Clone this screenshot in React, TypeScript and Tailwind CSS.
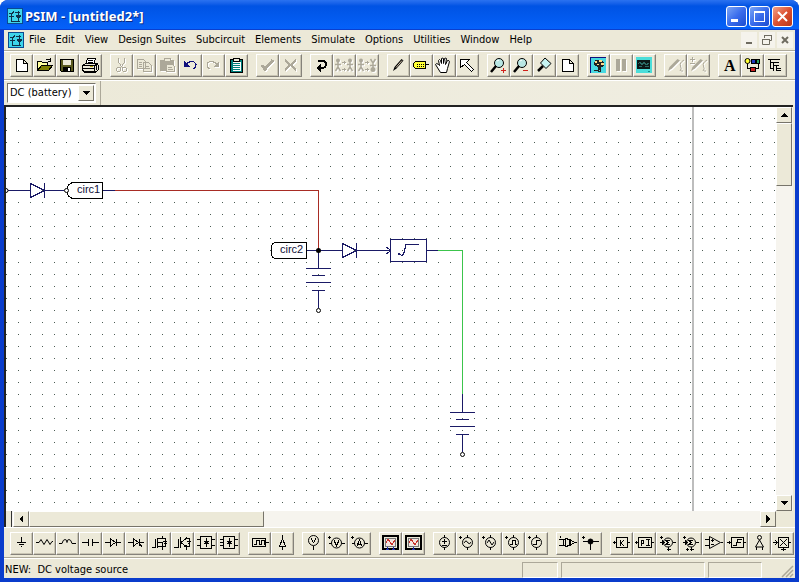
import type { ReactNode } from "react";
import clsx from "clsx";

const NAVY = "#1a1a66";

function Icon({ children, muted }: { children: ReactNode; muted?: boolean }) {
  return (
    <svg
      width="21"
      height="21"
      viewBox="1 1 21 21"
      fill="none"
      stroke={muted ? "#aca899" : "#000"}
      shapeRendering="crispEdges"
      className={clsx("shrink-0", muted && "drop-shadow-[1px_1px_0_#fff]")}
    >
      {children}
    </svg>
  );
}

type Tool = { name: string; icon: ReactNode; muted?: boolean };

function ToolGroup({ tools }: { tools: Tool[] }) {
  return (
    <div className="flex shrink-0">
      {tools.map((t) => (
        <button
          key={t.name}
          type="button"
          title={t.name}
          aria-label={t.name}
          disabled={t.muted}
          className="flex h-[23px] w-[23px] shrink-0 items-center justify-center border border-t-white border-l-white border-r-[#85827a] border-b-[#85827a] bg-[#ece9d8] shadow-[inset_-1px_-1px_0_#c9c5b4]"
        >
          <Icon muted={t.muted}>{t.icon}</Icon>
        </button>
      ))}
    </div>
  );
}

const page = <path d="M6.500 5.500h7l4 4v8h-11zM13.500 5.500v4h4" fill="#fff" />;

const person = (
  <>
    <circle cx="5" cy="6.500" r="2" fill="#aca899" stroke="none" shapeRendering="auto" />
    <path d="M2 10.500h6M5 8v6M5 13l-2.500 4M5 13l2.500 4" shapeRendering="auto" strokeWidth="1.500" />
    <path d="M9 8.500h4M11 7v3M9 15.500h4M11 14v3" />
  </>
);

const fileTools: Tool[] = [
  { name: "New", icon: page },
  {
    name: "Open",
    icon: (
      <>
        <path d="M4.500 16.500v-9h4l1 1h5v3" fill="#ffff9c" />
        <path d="M4.500 16.500l4-5h11l-4 5z" fill="#808000" />
        <path d="M12.500 6.500q2-3 5 0M17.500 4v3h-3" />
      </>
    ),
  },
  {
    name: "Save",
    icon: (
      <>
        <path d="M4.500 5.500h13v12h-12l-1-1z" fill="#5a5a20" />
        <path d="M7 6h8v5h-8z" fill="#ece9d8" stroke="none" />
        <path d="M7 13h8v5h-8z" fill="#000" stroke="none" />
        <path d="M12 14h2v3h-2z" fill="#fff" stroke="none" />
      </>
    ),
  },
  {
    name: "Print",
    icon: (
      <>
        <path d="M6.500 10.500l2-6h8l-2 6z" fill="#fff" />
        <path d="M9 6.500h5M8.500 8.500h5" />
        <path d="M3.500 11.500l3-2h11l2 2v4l-3 2.500h-11l-2-2z" fill="#ece9d8" />
        <path d="M3.500 11.500h12l4-2M15.500 11.500v6M4 14.500h11M6 17.500h9M17.500 11v5" />
        <path d="M11 12.500h3" stroke="#b5a000" />
      </>
    ),
  },
];

const editTools: Tool[] = [
  {
    name: "Cut",
    muted: true,
    icon: (
      <>
        <path d="M8.500 4v4l4 6M14.500 4v4l-4 6" />
        <circle cx="8.500" cy="15.500" r="2" />
        <circle cx="14.500" cy="15.500" r="2" />
      </>
    ),
  },
  {
    name: "Copy",
    muted: true,
    icon: <path d="M4.500 5.500h6l2 2v7h-8zM10.500 8.500h5l3 3v6h-8zM6 8.500h3M6 10.500h3M6 12.500h3M12 12.500h4M12 14.500h5" fill="#ece9d8" />,
  },
  {
    name: "Paste",
    muted: true,
    icon: (
      <>
        <path d="M4.500 6.500h13v10h-13z" fill="#aca899" />
        <path d="M8 4.500h6v3h-6z" fill="#ece9d8" />
        <path d="M10.500 10.500h6l2 2v5h-8zM12 13.500h4M12 15.500h5" fill="#ece9d8" />
      </>
    ),
  },
  {
    name: "Undo",
    icon: (
      <>
        <path d="M7 10.500c3-4 9-4 10 0c0 3-1 4-3 4" stroke="#10107c" />
        <path d="M5 7v6h6z" fill="#10107c" stroke="none" />
      </>
    ),
  },
  {
    name: "Redo",
    muted: true,
    icon: (
      <>
        <path d="M15 10.500c-3-4-9-4-10 0c0 3 1 4 3 4" />
        <path d="M17 7v6h-6z" fill="#aca899" stroke="none" />
      </>
    ),
  },
  {
    name: "Clipboard",
    icon: (
      <>
        <path d="M5.500 5.500h12v13h-12z" fill="#00807c" />
        <path d="M7.500 8h8v9h-8z" fill="#fff" stroke="none" />
        <path d="M8.500 4.500h6v3h-6z" fill="#ece9d8" />
        <path d="M8 9.500h7M8 11.500h7M8 13.500h7M8 15.500h7" stroke="#00807c" />
      </>
    ),
  },
];

const applyTools: Tool[] = [
  { name: "Accept", muted: true, icon: <path d="M6 11l3 4l8-9" strokeWidth="3" /> },
  { name: "Cancel", muted: true, icon: <path d="M6 6l11 10M17 6l-11 10" strokeWidth="2" /> },
];

const subcircuitTools: Tool[] = [
  {
    name: "Rotate",
    icon: (
      <>
        <path d="M8 6.500h4q4 1 4 4q0 3-5 4" strokeWidth="2" />
        <path d="M6 14l5-4v8z" fill="#000" stroke="none" />
      </>
    ),
  },
  { name: "Flip horizontal", muted: true, icon: <>{person}<g transform="translate(12 0)"><circle cx="5" cy="6.500" r="2" fill="#aca899" stroke="none" shapeRendering="auto" /><path d="M2 10.500h6M5 8v6M5 13l-2.500 4M5 13l2.500 4" shapeRendering="auto" strokeWidth="1.500" /></g></> },
  { name: "Flip vertical", muted: true, icon: <>{person}<g transform="translate(12 0)"><circle cx="5" cy="15.500" r="2.500" fill="#aca899" stroke="none" shapeRendering="auto" /><path d="M2 11.500h6M5 8v6M5 9l-2.500-4M5 9l2.500-4" shapeRendering="auto" strokeWidth="1.500" /></g></> },
];

const drawTools: Tool[] = [
  {
    name: "Wire",
    icon: (
      <g shapeRendering="auto">
        <path d="M6 17l1.500-4l7-8l2 1.500l-7 8z" fill="#000" stroke="none" />
        <path d="M9 13.500l6-7" stroke="#d8c8b0" />
      </g>
    ),
  },
  {
    name: "Label",
    icon: (
      <>
        <path d="M3.500 9.500l2-2h10v7h-10l-2-2zM16 10.500h3" fill="#ff3" />
        <path d="M7 10.500h7M7 12.500h7" strokeDasharray="1 1" />
      </>
    ),
  },
  {
    name: "Pan",
    icon: (
      <path
        d="M7.500 18.500l-5-8q1-2 3 0l1 1l-1-5q1-2 2 0l1 3v-5q2-1 2 0v5l1-5q2-1 2 0l-1 6l2-4q2 0 2 1l-2 7l-1 4z"
        fill="#fff"
        shapeRendering="auto"
      />
    ),
  },
  { name: "Select", icon: <path d="M4.500 5.500h9l-3 3l7 7l-2 2l-7-7l-4 3z" fill="#fff" /> },
];

const lens = (
  <g shapeRendering="auto">
    <circle cx="12" cy="9" r="4.500" fill="#b9e7e4" />
    <path d="M9 12l-5 6" strokeWidth="2.500" />
    <path d="M10 7l2-1" stroke="#fff" />
  </g>
);

const zoomTools: Tool[] = [
  { name: "Zoom in", icon: <>{lens}<path d="M14 16.500h5M16.500 14v5" stroke="#d0201a" /></> },
  { name: "Zoom out", icon: <>{lens}<path d="M13 16.500h5" stroke="#d0201a" /></> },
  {
    name: "Zoom to area",
    icon: (
      <g shapeRendering="auto">
        <path d="M12 4l6 5.500l-5 5l-5.500-5.500z" fill="#c6f4f2" />
        <path d="M10 12l-5 5" strokeWidth="2.500" />
      </g>
    ),
  },
  { name: "Fit to page", icon: page },
];

const runTools: Tool[] = [
  {
    name: "Run simulation",
    icon: (
      <>
        <path d="M3 3h16v16h-16z" fill="#48d8e0" stroke="none" />
        <path d="M3.500 19v-15.500h15" stroke="#10107c" />
        <path d="M8 6h7l2 3v3l-3 1v3h-3v-3l-4-2z" fill="#202020" stroke="none" />
        <path d="M12 6h3v2h-3zM14 9h3v2h-3zM8 7h2v2h-2zM10 10h2v1h-2z" fill="#ffdc8a" stroke="none" />
        <path d="M7 16.500h3l3 1l1-3" stroke="#202020" />
      </>
    ),
  },
  { name: "Pause", muted: true, icon: <path d="M6 5h4v12h-4zM12 5h4v12h-4z" fill="#aca899" stroke="none" /> },
  {
    name: "Run viewer",
    icon: (
      <>
        <path d="M3 3h16v16h-16z" fill="#4bddd9" stroke="none" />
        <path d="M4 6h13v9h-13z" fill="#0c1818" stroke="none" />
        <path d="M5 9.500l2-1l2 2l2-2l2 2l3-1M6 12.500h3M12 12.500h4" stroke="#2a6a64" />
        <path d="M15 17.500h2" stroke="#1a8a88" />
      </>
    ),
  },
];

const probePen = (
  <g shapeRendering="auto">
    <path d="M4 17l1.500-4l8-8l2.500 1.500l-8 8z" fill="#aca899" stroke="none" />
    <path d="M20 6q-5 3-3.500 6t-.500 5" />
    <path d="M17 17h2" />
  </g>
);

const probeTools: Tool[] = [
  { name: "Voltage probe", muted: true, icon: probePen },
  { name: "Differential probe", muted: true, icon: <>{probePen}<path d="M3 5.500h5M5.500 3v5M3 9.500h5" /></> },
];

const viewTools: Tool[] = [
  {
    name: "Text",
    icon: (
      <text x="6" y="17" fontSize="16" fontWeight="700" fill="#000" stroke="none" fontFamily='"Liberation Serif", serif'>
        A
      </text>
    ),
  },
  {
    name: "Set colors",
    icon: (
      <>
        <path d="M6.500 8v6.500h11v-6" />
        <circle cx="6.500" cy="7" r="2.500" fill="#ff3" shapeRendering="auto" />
        <path d="M10.500 5.500h4v4h-4z" fill="#2038c0" />
        <path d="M15.500 5.500h3v4h-3z" fill="#28a060" />
        <path d="M9.500 13.500h5v4h-5z" fill="#c82020" />
      </>
    ),
  },
  {
    name: "Element list",
    icon: <path d="M4 5.500h12M6.500 5v9h3M6 8.500h9M9.500 8v9M9 11.500h6M12.500 11v6M12 14.500h5M12 16.500h5" />,
  },
];

const topGroups = [
  fileTools,
  editTools,
  applyTools,
  subcircuitTools,
  drawTools,
  zoomTools,
  runTools,
  probeTools,
  viewTools,
];

const bridge = <path d="M6.500 4.500h11v12h-11zM12.500 6v9M10 9.500h5M10 11.500h5M11 10.500h3" />;
const source = (
  <>
    <circle cx="11.500" cy="10.500" r="5" shapeRendering="auto" />
    <path d="M11.500 3v3M11.500 15v3" />
  </>
);
const plus = <path d="M3 5.500h3M4.500 4v3" />;
const scope = (
  <>
    <path d="M4 4h15v13h-15z" strokeWidth="2" />
    <path d="M6.500 6.500h10v8h-10z" fill="#f5e6e0" stroke="#777" />
    <path d="M7 11l2-4l2 3l2 3l3-5" stroke="#c8342c" />
  </>
);
const summer = (
  <>
    <circle cx="12" cy="10.500" r="4.500" shapeRendering="auto" />
    <path d="M14 8.500h-4l2 2l-2 2h4M4 10.500h4M6 8.500l2 2l-2 2M17 10.500h3M12.500 15v4M10.500 17h4M4 5.500h3M5.500 4v3" />
  </>
);

const bottomGroups: Tool[][] = [
  [
    { name: "Ground", icon: <path d="M11.500 5v6M7 10.500h9M9 12.500h5M11 14.500h1" /> },
    { name: "Resistor", icon: <path d="M3 10.500h3l2-3l3 5l3-5l3 5l2-3h1" shapeRendering="auto" /> },
    { name: "Inductor", icon: <path d="M3 11.500h3q1-4 3-4q2 0 2 3q0-3 2-3q2 0 3 4h4" shapeRendering="auto" /> },
    { name: "Capacitor", icon: <path d="M3 10.500h6M9.500 7v7M13.500 7v7M14 10.500h6" /> },
    { name: "Diode", icon: <path d="M3 10.500h5M8.500 7v7l5-3.500zM14.500 7v7M14 10.500h5" /> },
    { name: "Thyristor", icon: <path d="M3 10.500h5M8.500 7v7l5-3.500zM14.500 7v7M14 10.500h5M14 11l3 4" /> },
    { name: "MOSFET", icon: <path d="M4 15.500h3v-9M9.500 6v10M10 6.500h8M10 10.500h4M10 14.500h8M14.500 4v3M14.500 10v8M17.500 6v9M15 9.500h4M16 11.500h3" /> },
    { name: "IGBT", icon: <path d="M3 15.500h4v-9M9.500 5v11M10 10.500l5-4v-2M10 10.500l5 4v3M15 6.500h3v8h-3M16 9.500h4M17 11.500h2M13 14.500h2v-2" /> },
    { name: "Single-phase bridge", icon: <>{bridge}<path d="M3 7.500h3M3 13.500h3M18 7.500h3M18 13.500h3" /></> },
    { name: "Three-phase bridge", icon: <>{bridge}<path d="M3 7.500h3M3 10.500h3M3 13.500h3M18 7.500h3M18 13.500h3" /></> },
  ],
  [
    { name: "Gating block", icon: <path d="M4.500 6.500h13v8h-13zM18 10.500h3M6 12.500h2v-4h3v4h2v-4h3v4" /> },
    { name: "On-off controller", icon: <path d="M11.500 3v4M11.500 7l-3 7h6zM11.500 14v4" /> },
  ],
  [
    { name: "Voltmeter", icon: <><circle cx="11.500" cy="8.500" r="5" shapeRendering="auto" /><path d="M9 6.500l2.500 4l2.500-4M11.500 14v4" /></> },
    { name: "Voltage sensor", icon: <>{plus}<circle cx="11.500" cy="11" r="5" shapeRendering="auto" /><path d="M9 8.500l2.500 5l2.500-5M4 11.500h3M17 11.500h3" /></> },
    { name: "Ammeter", icon: <>{plus}<circle cx="11.500" cy="11" r="5" shapeRendering="auto" /><path d="M9 14l2.500-6l2.500 6M10 12.500h3M4 11.500h3M17 11.500h3" /></> },
  ],
  [
    { name: "Two-channel scope", icon: <>{scope}<path d="M7 17h3M13 17h3M8.500 15v3M14.500 15v3" stroke="#2030b0" /></> },
    { name: "Scope", icon: <>{scope}<path d="M10 17h3M11.500 15v3" stroke="#2030b0" /></> },
  ],
  [
    { name: "DC source", icon: <>{source}<path d="M9 9.500h5M11.500 7v5M9 13.500h5" /></> },
    { name: "Sine source", icon: <>{source}{plus}<path d="M8 11q2-4 4 0q2 2 3-1" shapeRendering="auto" /></> },
    { name: "Triangular source", icon: <>{source}{plus}<path d="M8 11l2-3l3 5l2-3" shapeRendering="auto" /></> },
    { name: "Square source", icon: <>{source}{plus}<path d="M8 12.500h2v-4h3v4h2" /></> },
    { name: "Step source", icon: <>{source}{plus}<path d="M8 12.500h3.500v-4h3" /></> },
  ],
  [
    { name: "Voltage sensor block", icon: <path d="M3 7.500h6M3 13.500h6M4.500 4v2M7.500 7v7M9.500 6.500l4 1v6l-4 1zM14.500 8v5l4-2.500zM19 10.500h2" /> },
    { name: "Current sensor block", icon: <>{plus}<path d="M4 9.500h16M11.500 10v8" /><circle cx="11.500" cy="9.500" r="2.500" fill="#000" shapeRendering="auto" /></> },
  ],
  [
    { name: "Gain", icon: <path d="M6.500 5.500h11v10h-11zM3 10.500h3M4.500 9v3M18 10.500h2M10.500 8v6M14 8l-3 3l3 3" /> },
    { name: "PI controller", icon: <path d="M5.500 5.500h13v10h-13zM2 10.500h3M3.500 9v3M19 10.500h2M8.500 14v-6h2v3h-2M13 7.500h4M15.500 8v5M13 13.500h4" /> },
    { name: "Summer minus", icon: summer },
    { name: "Summer plus", icon: <>{summer}<path d="M7 17.500h3M8.500 16v3" /></> },
    { name: "Comparator", icon: <path d="M3 7.500h4M3 13.500h4M7.500 4.500v12l11-6zM19 10.500h2M9 8.500h3M9 12.500h3M10.500 7v3" shapeRendering="auto" /> },
    { name: "Limiter", icon: <path d="M6.500 5.500h12v10h-12zM2 10.500h4M4 9v3M19 10.500h2M8 13.500h3l2-6h4M13 10.500h3" /> },
    { name: "On-off switch", icon: <><circle cx="11.500" cy="5.500" r="2" shapeRendering="auto" /><path d="M11.500 8l-4 7h8z" shapeRendering="auto" /><path d="M8.500 15v3M14.500 15v3" /></> },
    { name: "Multiplier", icon: <path d="M7.500 5.500h10v10h-10zM2 10.500h5M4 8l2 2.500l-2 2.500M18 10.500h2M9 7l7 7M16 7l-7 7M12.500 16v3M10 17.500h5" /> },
  ],
];

const menus = [
  "File",
  "Edit",
  "View",
  "Design Suites",
  "Subcircuit",
  "Elements",
  "Simulate",
  "Options",
  "Utilities",
  "Window",
  "Help",
];

function AppLogo() {
  return (
    <svg width="16" height="16" viewBox="0 0 16 16" fill="none" stroke="#103048" shapeRendering="crispEdges" className="shrink-0">
      <path d="M0 0h16v16h-16z" fill="#3ed4ea" stroke="none" />
      <path d="M.5.5h15v15h-15z" stroke="#0a4a90" />
      <path d="M2 5.500h3l2-2M8 4.500h5M4.500 6v7h8M11.500 3v11M9 7.500h5M2 8.500h5" />
      <path d="M9 8h5l-2.500 3z" fill="#103048" stroke="none" />
    </svg>
  );
}

function TitleButton({ name, close, children }: { name: string; close?: boolean; children: ReactNode }) {
  return (
    <button
      type="button"
      aria-label={name}
      className={clsx(
        "flex h-[21px] w-[21px] items-center justify-center rounded-[3px] border border-white",
        close
          ? "bg-linear-to-br from-[#f0a088] via-[#dc5030] to-[#b83818]"
          : "bg-linear-to-br from-[#7ca4f4] via-[#3a6cec] to-[#1c4cd0]",
      )}
    >
      <svg width="19" height="19" viewBox="0 0 19 19" fill="none" stroke="#fff" shapeRendering="crispEdges">
        {children}
      </svg>
    </button>
  );
}

function MdiButton({ name, children }: { name: string; children: ReactNode }) {
  return (
    <button type="button" aria-label={name} className="flex h-4 w-4 items-center justify-center bg-[#f5f3ec]">
      <svg width="14" height="14" viewBox="0 0 14 14" fill="none" stroke="#6e6b60">
        {children}
      </svg>
    </button>
  );
}

function ScrollButton({ name, d }: { name: string; d: string }) {
  return (
    <button
      type="button"
      aria-label={name}
      className="flex h-4 w-4 shrink-0 items-center justify-center border border-t-white border-l-white border-r-[#77746a] border-b-[#77746a] bg-[#ece9d8]"
    >
      <svg width="14" height="14" viewBox="0 0 14 14" fill="#000" shapeRendering="crispEdges">
        <path d={d} />
      </svg>
    </button>
  );
}

function Battery({ x, y }: { x: number; y: number }) {
  return (
    <g transform={`translate(${x} ${y})`}>
      <path d="M.5 0v18M-12 18.500h25M-6 25.500h13M-12 32.500h25M-6 40.500h13M.5 41v17" />
      <circle cx=".5" cy="60.500" r="2" fill="#fff" stroke="#000" shapeRendering="auto" />
    </g>
  );
}

function Schematic() {
  return (
    <svg width="100%" height="100%" className="absolute inset-0" fill="none" stroke={NAVY} shapeRendering="crispEdges">
      <defs>
        <pattern id="grid" width="12" height="12" patternUnits="userSpaceOnUse" y="11">
          <rect width="1" height="1" fill="#4c5c54" stroke="none" />
        </pattern>
      </defs>
      <rect width="100%" height="100%" fill="url(#grid)" stroke="none" />
      <path d="M687 0v2000" stroke="#bdbdbd" strokeWidth="2" />
      <g transform="translate(-6 -107)">
        <path d="M115 190.500h203.500v60" stroke="#a82c24" />
        <path d="M438 250.500h24.500v144" stroke="#3cc44c" />

        <path d="M8 190.500h22M44 190.500h20M103 190.500h12" />
        <path d="M30.500 183.500v14l14-7zM44.500 183v15" />
        <circle cx="6" cy="190.500" r="2" fill="#fff" stroke="#000" shapeRendering="auto" />
        <path d="M102.500 182.500h-30q-5 2-5 5v6q0 3 5 5h30z" fill="#fff" stroke="#000" />
        <circle cx="66.500" cy="190.500" r="2" fill="#fff" stroke="#000" shapeRendering="auto" />

        <path d="M306 250.500h36M356 250.500h34M427 250.500h11" />
        <path d="M342.500 243.500v14l14-7zM356.500 243v15M386.500 247l4 3.500l-4 3.500" />
        <path d="M306.500 242.500h-31q-4 1-4 4v8q0 3 4 4h31z" fill="#fff" stroke="#000" />
        <path d="M390.500 239.500h36v22h-36z" />
        <path d="M398 254.500q1-2 2 0q3 2 4-2l2-8h13" />
        <Battery x={318} y={250} />
        <Battery x={462} y={394} />
        <circle cx="318.500" cy="250.500" r="2.500" fill="#000" stroke="none" shapeRendering="auto" />

        <g fill="#101038" stroke="none" fontSize="11" fontFamily='"Liberation Sans", Arial, sans-serif'>
          <text x="77" y="193">circ1</text>
          <text x="280" y="253">circ2</text>
        </g>
      </g>
    </svg>
  );
}

export default function App() {
  return (
    <div className="flex h-screen w-full flex-col overflow-hidden rounded-t-lg bg-[#0a3ccc] font-['DejaVu_Sans_Condensed','Noto_Sans',sans-serif] text-[11px] leading-4 text-black">
      <header className="flex h-[30px] shrink-0 items-center bg-linear-to-b from-[#2a72f0] via-[#0053e4] via-20% to-[#0562fb] pt-0.5 pr-1.5 pl-[7px] shadow-[inset_0_-1px_0_#0a3fcf]">
        <AppLogo />
        <h1 className="ml-0.5 flex-1 font-['Noto_Sans',sans-serif] text-[13px] font-bold text-white [text-shadow:1px_1px_0_#0a2a80]">
          PSIM - [untitled2*]
        </h1>
        <div className="flex gap-0.5">
          <TitleButton name="Minimize">
            <path d="M4 13.500h7" strokeWidth="3" />
          </TitleButton>
          <TitleButton name="Maximize">
            <path d="M4.500 4.500h10v10h-10zM4 5.500h11" />
          </TitleButton>
          <TitleButton name="Close" close>
            <path d="M5 5l9 9M14 5l-9 9" strokeWidth="2" shapeRendering="auto" />
          </TitleButton>
        </div>
      </header>

      <div className="mx-1 mb-1 flex min-h-0 flex-1 flex-col bg-[#ece9d8]">
        <nav className="flex h-[21px] shrink-0 items-center border-b border-[#aca899] pr-0.5 pl-1">
          <AppLogo />
          <div className="flex flex-1">
            {menus.map((m) => (
              <button key={m} type="button" className="px-[5px] whitespace-nowrap">
                {m}
              </button>
            ))}
          </div>
          <div className="flex gap-0.5">
            <MdiButton name="Minimize document">
              <path d="M4 10h6" strokeWidth="2" />
            </MdiButton>
            <MdiButton name="Restore document">
              <path d="M4.500 5v-2.500h7v5h-2M2.500 6.500h7v5h-7zM2 6.500h8M4 2.500h8" />
            </MdiButton>
            <MdiButton name="Close document">
              <path d="M4 4l6 6M10 4l-6 6" strokeWidth="2" />
            </MdiButton>
          </div>
        </nav>

        <div className="flex h-[29px] shrink-0 items-center gap-2 overflow-hidden border-t border-b border-t-white border-b-[#aca899] pl-1.5">
          {topGroups.map((g) => (
            <ToolGroup key={g[0].name} tools={g} />
          ))}
        </div>

        <div className="flex h-[25px] shrink-0 items-center border-t border-white bg-linear-to-r from-[#ece9d8] to-[#f0eee2] pl-[3px]">
          <div className="relative">
            <select
              aria-label="Element"
              className="h-5 w-[89px] appearance-none border border-t-[#77746a] border-l-[#77746a] border-r-white border-b-white bg-white pl-0.5 text-[11px]"
            >
              <option>DC (battery)</option>
            </select>
            <span className="pointer-events-none absolute top-0.5 right-0.5 flex h-4 w-4 items-center justify-center border border-t-white border-l-white border-r-[#77746a] border-b-[#77746a] bg-[#ece9d8]">
              <svg width="7" height="4" viewBox="0 0 7 4" shapeRendering="crispEdges">
                <path d="M0 0h7l-3.500 4z" />
              </svg>
            </span>
          </div>
          <div className="ml-1 h-full border-l border-[#aca899]" />
        </div>

        <main className="mr-0.5 flex min-h-0 flex-1 flex-col border-t-2 border-l-2 border-t-[#222] border-l-[#222]">
          <div className="flex min-h-0 flex-1">
            <div className="relative min-w-0 flex-1 overflow-hidden bg-white">
              <Schematic />
            </div>
            <div className="flex w-[17px] shrink-0 flex-col bg-[#f6f4ee] pr-px">
              <ScrollButton name="Scroll up" d="M3 9h8l-4-4z" />
              <div className="h-[63px] border border-t-white border-l-white border-r-[#77746a] border-b-[#77746a] bg-[#ece9d8]" />
              <div className="flex-1" />
              <ScrollButton name="Scroll down" d="M3 5h8l-4 4z" />
            </div>
          </div>
          <div className="flex h-4 shrink-0 bg-[#f6f4ee]">
            <div className="mr-px w-1.5 border-r border-[#333] bg-[#ece9d8]" />
            <ScrollButton name="Scroll left" d="M9 3v8l-4-4z" />
            <div className="w-[235px] border border-t-white border-l-white border-r-[#77746a] border-b-[#77746a] bg-[#ece9d8]" />
            <div className="flex-1" />
            <ScrollButton name="Scroll right" d="M5 3v8l4-4z" />
            <div className="w-[17px] bg-[#ece9d8]" />
          </div>
        </main>

        <div className="flex h-[31px] shrink-0 items-center gap-2 overflow-hidden border-t border-b border-t-white border-b-[#aca899] pt-0.5 pl-1.5">
          {bottomGroups.map((g) => (
            <ToolGroup key={g[0].name} tools={g} />
          ))}
        </div>

        <footer className="flex h-5 shrink-0 items-center gap-[3px] border-t border-white pt-0.5 pl-px">
          <p className="flex-1 whitespace-pre">NEW:  DC voltage source</p>
          <div className="h-4 w-9 border border-t-[#aca899] border-l-[#aca899] border-r-white border-b-white" />
          <div className="h-4 w-36 border border-t-[#aca899] border-l-[#aca899] border-r-white border-b-white" />
          <div className="h-4 w-[54px] border border-t-[#aca899] border-l-[#aca899] border-r-white border-b-white" />
          <svg width="30" height="16" viewBox="0 0 30 16" stroke="#aca899" strokeWidth="1.500">
            <path d="M17 15l11-11M21 15l7-7M25 15l3-3" />
          </svg>
        </footer>
      </div>
    </div>
  );
}
